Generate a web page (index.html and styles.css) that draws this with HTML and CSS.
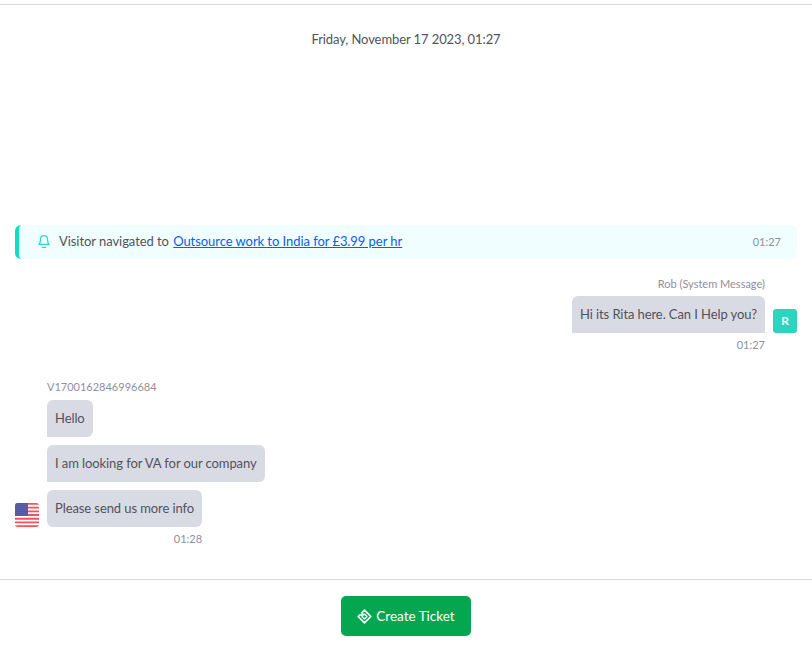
FILE: index.html
```html
<!DOCTYPE html>
<html lang="en">
<head>
<meta charset="UTF-8" />
<meta name="viewport" content="width=device-width, initial-scale=1" />
<title>Conversation</title>
<link rel="stylesheet" href="styles.css">
</head>
<body>

<div class="conversation">
  <div class="date">Friday, November 17 2023, 01:27</div>

  <div class="activity">
    <svg class="bell" width="14" height="15" viewBox="0 0 24 24" fill="none" stroke="currentColor" stroke-width="2" stroke-linecap="round" stroke-linejoin="round">
      <path d="M18 8A6 6 0 0 0 6 8c0 7-3 9-3 9h18s-3-2-3-9"/>
      <path d="M9 22h6"/>
    </svg>
    <span class="activity-text">Visitor navigated to <a href="#">Outsource work to India for £3.99 per hr</a></span>
    <span class="activity-time">01:27</span>
  </div>

  <div class="message outgoing">
    <div class="message-body">
      <div class="sender">Rob (System Message)</div>
      <div class="bubble">Hi its Rita here. Can I Help you?</div>
      <div class="time">01:27</div>
    </div>
    <div class="avatar">R</div>
  </div>

  <div class="message incoming">
    <svg class="flag" width="24" height="24" viewBox="0 0 24 24">
      <defs>
        <clipPath id="flag-clip"><rect width="24" height="24" rx="3"/></clipPath>
        <pattern id="flag-stars" width="2" height="2" patternUnits="userSpaceOnUse">
          <circle cx="1" cy="1" r=".55" fill="#a3a8d4"/>
        </pattern>
      </defs>
      <g clip-path="url(#flag-clip)">
        <rect width="24" height="24" fill="#fff"/>
        <path d="M0 0h24v1.85H0zM0 3.7h24v1.85H0zM0 7.4h24v1.85H0zM0 11.1h24v1.85H0zM0 14.8h24v1.85H0zM0 18.5h24v1.85H0zM0 22.2h24V24H0z" fill="#f9505c"/>
        <rect width="13" height="13" fill="#41479b"/>
        <rect width="13" height="13" fill="url(#flag-stars)"/>
      </g>
    </svg>
    <div class="message-body">
      <div class="sender">V1700162846996684</div>
      <div class="bubble">Hello</div>
      <div class="bubble">I am looking for VA for our company</div>
      <div class="last-group">
        <div class="bubble last">Please send us more info</div>
        <div class="time">01:28</div>
      </div>
    </div>
  </div>
</div>

<div class="footer">
  <button class="ticket-btn">
    <svg width="15" height="15" viewBox="0 0 15 15" fill="none" stroke="#fff" stroke-linejoin="round">
      <path d="M7.5 1.2 13.8 7.5 7.5 13.8 1.2 7.5l1.7-1.7a1.3 1.3 0 0 0 1.9-1.9z" stroke-width="1.7"/>
      <path d="M7.5 5 10 7.5 7.5 10 5 7.5z" stroke-width="1.2"/>
    </svg>
    Create Ticket
  </button>
</div>

</body>
</html>
```

FILE: styles.css
```css
html, body {
  margin: 0;
  height: 647px;
  overflow: hidden;
}
body {
  font-family: Lato, "Open Sans", sans-serif;
  font-size: 13px;
  letter-spacing: -0.09px;
  line-height: 21px;
  color: #52525b;
  background: #fff;
  padding-top: 4px;
  box-sizing: border-box;
}
.conversation {
  border-top: 1px solid #dcdde4;
  padding: 0 15px;
  height: 575px;
  box-sizing: border-box;
}
.date {
  padding-top: 24px;
  text-align: center;
}
.activity {
  display: flex;
  align-items: center;
  margin-top: 175px;
  height: 34px;
  padding: 0 16px 2px 18px;
  box-sizing: border-box;
  background: #f0feff;
  border-left: 4px solid #14dcc4;
  border-radius: 6px;
  letter-spacing: -0.06px;
}
.bell {
  color: #2adcc8;
  margin-right: 8px;
  flex: none;
}
.activity-text {
  flex: 1;
}
.activity a {
  margin-left: 1px;
  color: #0b5fe8;
}
.activity-time {
  font-size: 11px;
  letter-spacing: 0;
  color: #8f8f9c;
}
.message {
  display: flex;
  align-items: flex-end;
  gap: 8px;
}
.message-body {
  display: flex;
  flex-direction: column;
}
.outgoing {
  justify-content: flex-end;
  margin-top: 16px;
}
.outgoing .message-body {
  align-items: flex-end;
}
.outgoing .bubble {
  border-bottom-right-radius: 0;
  margin-bottom: 0;
}
.outgoing .avatar {
  margin-bottom: 21px;
}
.incoming {
  margin-top: 24px;
}
.incoming .message-body {
  align-items: flex-start;
}
.incoming .sender {
  margin-bottom: 4px;
}
.incoming .flag {
  margin-bottom: 21px;
  flex: none;
}
.last-group {
  display: flex;
  flex-direction: column;
}
.sender {
  font-size: 11px;
  letter-spacing: 0;
  line-height: 18px;
  color: #8f8f9c;
  margin-bottom: 3px;
}
.bubble {
  background: #d9dbe4;
  border-radius: 6px 6px 6px 0;
  padding: 8px;
  margin-bottom: 8px;
}
.bubble.last {
  border-bottom-left-radius: 6px;
  margin-bottom: 0;
}
.time {
  font-size: 11px;
  letter-spacing: 0;
  line-height: 18px;
  color: #8f8f9c;
  align-self: flex-end;
  margin-top: 3px;
}
.avatar {
  width: 24px;
  height: 24px;
  background: #2dd4c0;
  border-radius: 3px;
  color: #fff;
  font-size: 12px;
  font-weight: bold;
  line-height: 24px;
  text-align: center;
}
.footer {
  border-top: 1px solid #dcdde4;
  display: flex;
  justify-content: center;
  padding-top: 16px;
}
.ticket-btn {
  display: flex;
  align-items: center;
  justify-content: center;
  gap: 4px;
  width: 130px;
  height: 40px;
  background: #04a650;
  border: none;
  border-radius: 5px;
  color: #fff;
  font-family: inherit;
  font-size: 13.5px;
  cursor: pointer;
}
```
